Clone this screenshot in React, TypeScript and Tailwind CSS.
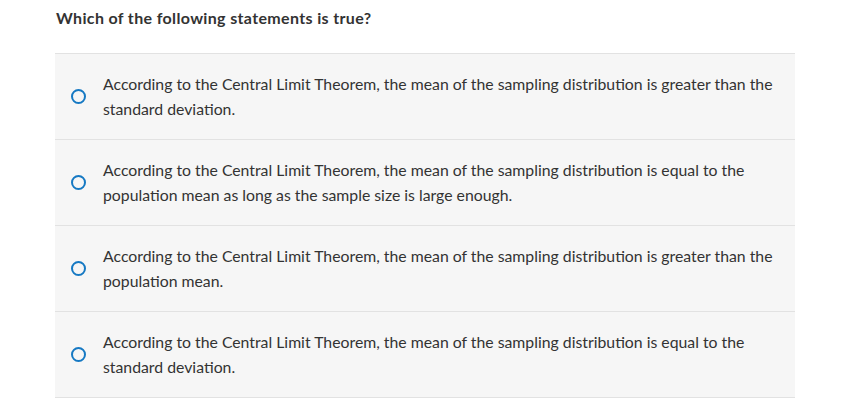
import React from "react";

const options = [
  "According to the Central Limit Theorem, the mean of the sampling distribution is greater than the standard deviation.",
  "According to the Central Limit Theorem, the mean of the sampling distribution is equal to the population mean as long as the sample size is large enough.",
  "According to the Central Limit Theorem, the mean of the sampling distribution is greater than the population mean.",
  "According to the Central Limit Theorem, the mean of the sampling distribution is equal to the standard deviation.",
];

export default function App() {
  return (
    <div className="w-[844px] h-[419px] bg-white text-[#333333]" style={{ fontFamily: "Lato, 'Open Sans', sans-serif" }}>
      <div className="pl-[56px] pt-[9px] text-[16px] font-bold leading-[18px] tracking-[0.35px]">Which of the following statements is true?</div>
      <div className="ml-[55px] mt-[26px] w-[740px] border-t border-[#e2e2e2]">
        {options.map((o, i) => (
          <div key={i} className="flex items-center h-[86px] bg-[#f6f6f6] border-b border-[#e2e2e2] pl-[16px] pr-[4px]">
            <div className="w-[15px] h-[15px] rounded-full border-[2.5px] border-[#1679c3] shrink-0" />
            <div className="ml-[17px] text-[15.8px] leading-[25px] pb-[1px]">{o}</div>
          </div>
        ))}
      </div>
    </div>
  );
}
